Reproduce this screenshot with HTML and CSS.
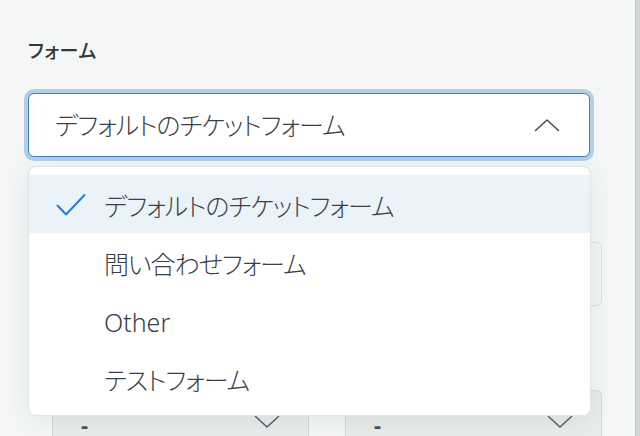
FILE: index.html
```html
<!DOCTYPE html>
<html lang="ja">
<head>
<meta charset="utf-8">
<link rel="stylesheet" href="styles.css">
</head>
<body>
<div class="page">
  <div class="content">
    <div class="label">フォーム</div>
    <div class="select-wrap">
      <div class="select open">
        <span class="select-text ja">デフォルトのチケットフォーム</span>
        <svg class="chev" width="26" height="14" viewBox="0 0 26 14"><path d="M1.5 12.5 L13 2 L24.5 12.5" fill="none" stroke="#4a4f54" stroke-width="1.6" stroke-linecap="round" stroke-linejoin="round"/></svg>
      </div>
      <ul class="menu">
        <li class="item selected">
          <svg class="check" width="30" height="24" viewBox="0 0 30 24"><path d="M1.5 12.5 L10 21.5 L28.5 2" fill="none" stroke="#2b7bd0" stroke-width="2" stroke-linecap="round" stroke-linejoin="round"/></svg>
          <span class="ja">デフォルトのチケットフォーム</span>
        </li>
        <li class="item"><span class="ja">問い合わせフォーム</span></li>
        <li class="item"><span>Other</span></li>
        <li class="item"><span class="ja">テストフォーム</span></li>
      </ul>
    </div>
    <div class="behind">
      <div class="field"></div>
      <div class="row">
        <div class="field dis"><span class="dash">-</span>
          <svg class="chev" width="26" height="14" viewBox="0 0 26 14"><path d="M1.5 1.5 L13 12 L24.5 1.5" fill="none" stroke="#5a6065" stroke-width="1.6" stroke-linecap="round" stroke-linejoin="round"/></svg>
        </div>
        <div class="field dis"><span class="dash">-</span>
          <svg class="chev" width="26" height="14" viewBox="0 0 26 14"><path d="M1.5 1.5 L13 12 L24.5 1.5" fill="none" stroke="#5a6065" stroke-width="1.6" stroke-linecap="round" stroke-linejoin="round"/></svg>
        </div>
      </div>
    </div>
  </div>
  <div class="scrollbar"></div>
</div>
</body>
</html>
```

FILE: styles.css
```css
html, body {
  margin: 0;
  padding: 0;
}
body {
  width: 640px;
  height: 436px;
  overflow: hidden;
  background: #f5f7f7;
  font-family: "Noto Sans", "Noto Sans CJK JP", sans-serif;
  font-feature-settings: "palt";
  color: #3a3f44;
}
.page {
  display: flex;
  height: 436px;
}
.content {
  flex: 1;
  padding: 38px 45px 0 28px;
  overflow: hidden;
}
.scrollbar {
  width: 4px;
  background: #d3d6d6;
  border-left: 1px solid #c7caca;
}
.label {
  font-size: 19px;
  font-weight: 500;
  line-height: 26px;
  height: 26px;
  color: #33383c;
  margin-bottom: 29px;
  letter-spacing: 0.5px;
}
.ja {
  letter-spacing: -1px;
}
.select-wrap {
  position: relative;
}
.select {
  height: 64px;
  box-sizing: border-box;
  background: #fff;
  border: 1.5px solid #3f80c4;
  border-radius: 6px;
  box-shadow: 0 0 0 4px #b3cfe8;
  display: flex;
  align-items: center;
  justify-content: space-between;
  padding: 0 29px 0 26px;
}
.select-text {
  font-size: 25px;
  font-weight: 300;
  line-height: 30px;
  color: #3b4045;
}
.menu {
  position: absolute;
  top: calc(100% + 10px);
  left: 1px;
  right: 0;
  margin: 0;
  padding: 8px 0;
  list-style: none;
  background: #fff;
  border-radius: 7px;
  box-shadow: 0 0 0 1px #e2e5e5, 0 4px 28px rgba(40, 60, 60, 0.10);
  z-index: 5;
}
.item {
  height: 58px;
  display: flex;
  align-items: center;
  padding-left: 75px;
  position: relative;
  font-size: 25px;
  font-weight: 300;
  line-height: 30px;
  color: #3b4045;
}
.item span {
  padding-top: 3px;
}
.item.selected {
  background: #ebf3fa;
}
.check {
  position: absolute;
  left: 27px;
  top: 18px;
}
.behind {
  margin: 85px -12px 0 24px;
}
.field {
  height: 64px;
  box-sizing: border-box;
  border: 1px solid #d8dede;
  border-radius: 6px;
  background: #f3f6f6;
}
.row {
  display: flex;
  gap: 36px;
  margin-top: 84px;
}
.row .field {
  flex: 1;
  display: flex;
  align-items: center;
  justify-content: space-between;
  padding: 0 28px 0 28px;
  background: #e8edec;
  border-color: #d3d9d8;
  color: #4a5055;
}
.dash {
  font-size: 22px;
  line-height: 20px;
  font-weight: 700;
  padding-top: 3px;
}
```
